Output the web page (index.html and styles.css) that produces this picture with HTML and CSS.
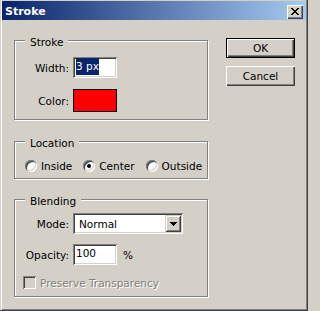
FILE: index.html
```html
<!DOCTYPE html>
<html>
<head>
<meta charset="utf-8">
<title>Stroke</title>
<link rel="stylesheet" href="styles.css">
</head>
<body>
<div class="window">
  <div class="titlebar">
    <span class="title">Stroke</span>
    <div class="close"><svg width="8" height="7" viewBox="0 0 8 7"><path d="M0 0h2v1h1v1h2v-1h1v-1h2v1h-1v1h-1v1h-1v1h1v1h1v1h1v1h-2v-1h-1v-1h-2v1h-1v1h-2v-1h1v-1h1v-1h1v-1h-1v-1h-1v-1h-1z" fill="#000"/></svg></div>
  </div>
  <div class="client">
    <div class="groups">
      <fieldset class="group g-stroke">
        <legend>Stroke</legend>
        <div class="stroke-rows">
          <div class="row">
            <span class="lbl">Width:</span>
            <div class="field"><span class="sel">3 px</span></div>
          </div>
          <div class="row">
            <span class="lbl">Color:</span>
            <div class="swatch"></div>
          </div>
        </div>
      </fieldset>
      <fieldset class="group g-location">
        <legend>Location</legend>
        <div class="radios">
          <div class="opt"><span class="radio"></span><span>Inside</span></div>
          <div class="opt"><span class="radio on"></span><span>Center</span></div>
          <div class="opt"><span class="radio"></span><span>Outside</span></div>
        </div>
      </fieldset>
      <fieldset class="group g-blend">
        <legend>Blending</legend>
        <div class="blend-rows">
          <div class="row mode-row">
            <span class="lbl">Mode:</span>
            <div class="combo">
              <span class="combo-text">Normal</span>
              <div class="drop"><svg width="7" height="4" viewBox="0 0 7 4"><path d="M0 0h7v1h-1v1h-1v1h-1v1h-1v-1h-1v-1h-1v-1h-1z" fill="#000"/></svg></div>
            </div>
          </div>
          <div class="row opacity-row">
            <span class="lbl">Opacity:</span>
            <div class="field"><span class="val">100</span></div>
            <span class="pct">%</span>
          </div>
          <div class="check-row">
            <span class="check"></span>
            <span class="disabled">Preserve Transparency</span>
          </div>
        </div>
      </fieldset>
    </div>
    <div class="buttons">
      <div class="btn default">OK</div>
      <div class="btn">Cancel</div>
    </div>
  </div>
</div>
</body>
</html>
```

FILE: styles.css
```css
html, body {
  margin: 0;
  padding: 0;
  background: #d4d0c8;
}
body {
  font-family: "DejaVu Sans", "Liberation Sans", sans-serif;
  font-size: 10.5px;
  color: #000;
}
.window {
  box-sizing: border-box;
  width: 308px;
  height: 311px;
  background: #d4d0c8;
  padding: 1px 1px 0 2px;
  border-right: 1px solid #404040;
  border-bottom: 1px solid #404040;
  box-shadow: inset 1px 0 0 #d4d0c8, inset 2px 0 0 #fff, inset -1px -1px 0 #808080;
  display: flex;
  flex-direction: column;
}
.titlebar {
  height: 19px;
  display: flex;
  align-items: flex-start;
  background: linear-gradient(to right, #0a246a, #a6caf0);
}
.title {
  flex: 1;
  font-family: "DejaVu Sans", sans-serif;
  font-weight: bold;
  font-size: 11px;
  color: #fff;
  padding: 2px 0 0 3px;
  line-height: 17px;
}
.close {
  box-sizing: border-box;
  width: 16px;
  height: 14px;
  margin: 4px 3px 0 0;
  padding-bottom: 1px;
  background: #d4d0c8;
  box-shadow: inset 1px 1px 0 #fff, inset -1px -1px 0 #404040, inset -2px -2px 0 #808080;
  display: flex;
  align-items: center;
  justify-content: center;
}
.close svg { display: block; }
.client {
  display: flex;
  align-items: flex-start;
  padding: 13px 0 0 12px;
}
.groups {
  display: flex;
  flex-direction: column;
  width: 194px;
}
fieldset.group {
  margin: 0;
  padding: 0;
  min-width: 0;
  border: 1px solid #808080;
  box-shadow: 1px 1px 0 #fff, inset 1px 1px 0 #fff;
}
.g-stroke { margin-bottom: 14px !important; }
.g-location { margin-bottom: 13px !important; }
legend {
  margin-left: 10px;
  padding: 3px 5px 0;
  line-height: 12px;
  background: #d4d0c8;
}
.row {
  display: flex;
  align-items: center;
}
.lbl {
  width: 54px;
  text-align: right;
  margin-right: 4px;
  flex: none;
}
.stroke-rows {
  display: flex;
  flex-direction: column;
  gap: 11px;
  padding: 9px 0 7px;
}
.field {
  box-sizing: border-box;
  width: 44px;
  height: 21px;
  background: #fff;
  padding: 1px 0 0 3px;
  line-height: 17px;
  white-space: nowrap;
  box-shadow: inset 1px 1px 0 #808080, inset -1px -1px 0 #fff, inset 2px 2px 0 #404040, inset -2px -2px 0 #d4d0c8;
}
.sel {
  display: inline-block;
  background: #0a246a;
  color: #fff;
  line-height: 17px;
}
.swatch {
  box-sizing: border-box;
  width: 44px;
  height: 23px;
  background: #ff0000;
  border: 1px solid #000;
}
.radios {
  display: flex;
  align-items: center;
  height: 12px;
  padding: 11px 0 6px 10px;
}
.opt {
  display: flex;
  align-items: center;
  gap: 4px;
  margin-right: 11px;
}
.radio {
  position: relative;
  width: 12px;
  height: 12px;
  border-radius: 50%;
  background: #fff;
  box-shadow: inset 1px 1px 0 #808080, inset -1px -1px 0 #fff, inset 2px 2px 0 #404040, inset -2px -2px 0 #d4d0c8;
  flex: none;
}
.radio.on::after {
  content: "";
  position: absolute;
  left: 4px;
  top: 4px;
  width: 4px;
  height: 4px;
  border-radius: 50%;
  background: #000;
}
.blend-rows {
  display: flex;
  flex-direction: column;
  padding: 6px 0 7px;
}
.mode-row { margin-bottom: 10px; }
.opacity-row { margin-bottom: 11px; }
.combo {
  box-sizing: border-box;
  width: 110px;
  height: 21px;
  padding: 2px;
  background: #fff;
  display: flex;
  align-items: center;
  box-shadow: inset 1px 1px 0 #808080, inset -1px -1px 0 #fff, inset 2px 2px 0 #404040, inset -2px -2px 0 #d4d0c8;
}
.combo-text { margin-left: 4px; }
.drop {
  margin-left: auto;
  width: 16px;
  height: 17px;
  background: #d4d0c8;
  display: flex;
  align-items: center;
  justify-content: center;
  box-shadow: inset 1px 1px 0 #d4d0c8, inset -1px -1px 0 #404040, inset 2px 2px 0 #fff, inset -2px -2px 0 #808080;
}
.drop svg { display: block; }
.val { line-height: 17px; }
.pct { margin-left: 6px; }
.check-row {
  display: flex;
  align-items: center;
  height: 13px;
  padding-left: 8px;
  gap: 4px;
}
.check {
  width: 13px;
  height: 13px;
  flex: none;
  background: #d4d0c8;
  box-shadow: inset 1px 1px 0 #808080, inset -1px -1px 0 #fff, inset 2px 2px 0 #404040, inset -2px -2px 0 #d4d0c8;
}
.disabled {
  color: #808080;
  text-shadow: 1px 1px 0 #fff;
}
.buttons {
  display: flex;
  flex-direction: column;
  gap: 8px;
  margin-left: 18px;
  padding-top: 5px;
}
.btn {
  box-sizing: border-box;
  width: 69px;
  height: 20px;
  background: #d4d0c8;
  display: flex;
  align-items: center;
  justify-content: center;
  box-shadow: inset 1px 1px 0 #fff, inset -1px -1px 0 #404040, inset -2px -2px 0 #808080;
}
.btn.default {
  border: 1px solid #000;
}
```
